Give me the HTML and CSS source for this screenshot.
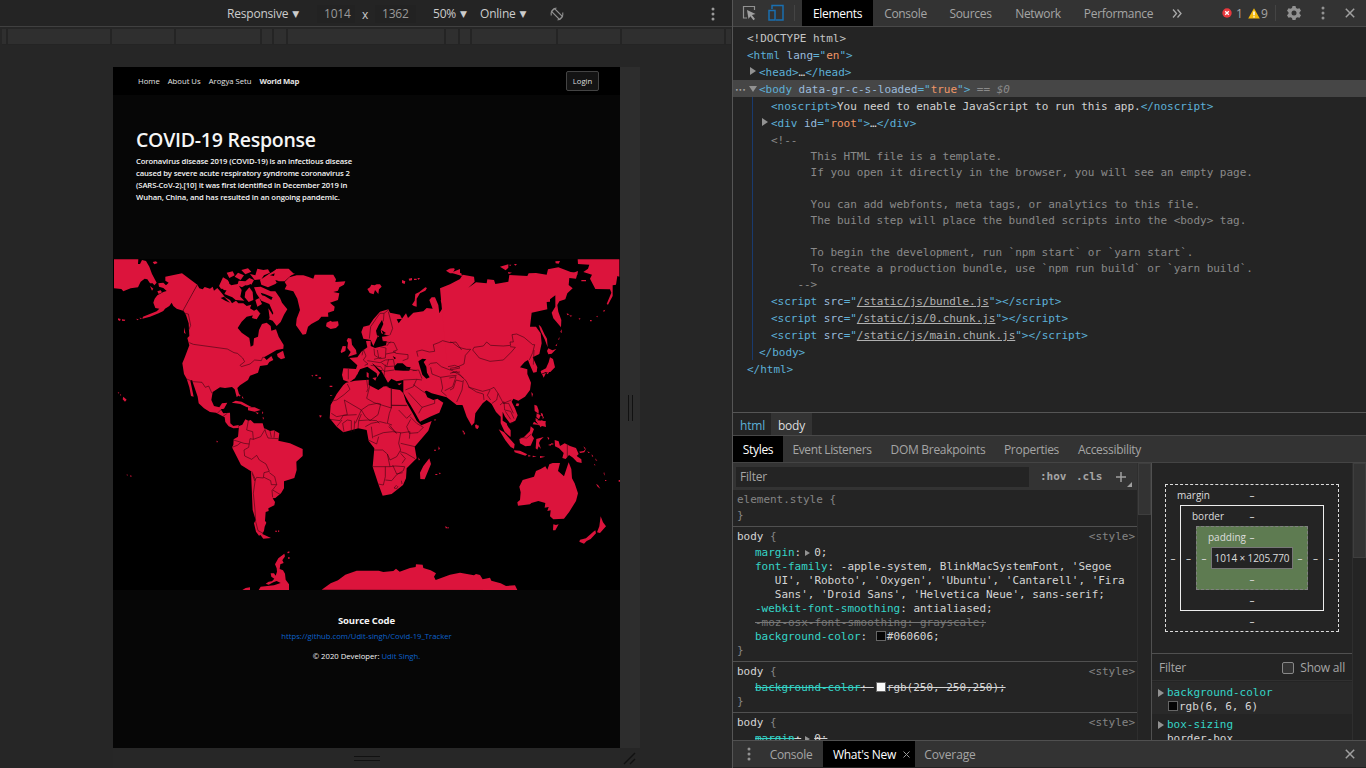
FILE: index.html
```html
<!DOCTYPE html>
<html lang="en">
<head>
<meta charset="utf-8">
<title>DevTools</title>
<link rel="stylesheet" href="styles.css">
</head>
<body>
<div class="app">
  <section class="preview">
    <div class="device-bar">
      <span class="preset">Responsive <i class="caret">▼</i></span>
      <span class="size">1014</span><span class="times">x</span><span class="size second">1362</span>
      <span class="scale">50% <i class="caret">▼</i></span>
      <span class="online">Online <i class="caret">▼</i></span>
      <svg class="rotate" width="16" height="16" viewBox="0 0 16 16" fill="none" stroke="#909090" stroke-width="1.1"><path d="M2.300 9.500A6 6 0 0 1 7.500 2M13.700 6.500A6 6 0 0 1 8.500 14"/><path d="M2.500 5.500 5.500 2.500 13.500 10.500 10.500 13.500Z"/></svg>
      <svg class="dots" width="4" height="14" viewBox="0 0 4 14" fill="#9a9a9a"><circle cx="2" cy="2" r="1.5"/><circle cx="2" cy="7" r="1.5"/><circle cx="2" cy="12" r="1.5"/></svg>
    </div>
    <div class="ruler"><i class="r1"></i><i class="r2"></i><i class="r3"></i><i class="r4"></i><i class="r5"></i><i class="r6"></i><i class="r7"></i><i class="r8"></i><i class="r9"></i><i class="r10"></i><i class="r11"></i><i class="r12"></i><i class="r13"></i></div>
    <div class="stage">
      <main class="site">
        <nav class="nav"><span>Home</span><span>About Us</span><span>Arogya Setu</span><b>World Map</b><button class="login">Login</button></nav>
        <header class="hero">
          <h1>COVID-19 Response</h1>
          <p>Coronavirus disease 2019 (COVID-19) is an infectious disease<br>caused by severe acute respiratory syndrome coronavirus 2<br>(SARS-CoV-2).[10] It was first identified in December 2019 in<br>Wuhan, China, and has resulted in an ongoing pandemic.</p>
        </header>
        <svg class="map" width="507" height="331" viewBox="9 27 1521 993">
          <g class="land">
            <path d="M12 28H85L84 42L90 42L96 30L108 33L118 50L126 72L140 98L133 106L128 100L120 100L112 88L104 86L92 95L84 112L62 115L40 124L34 117L12 115ZM128 36l10-2 5 5-10 4ZM120 108l10 8-4 6ZM142 124l10-3 4 6-10 5Z"/>
            <path d="M166 80L216 70L262 104L219 182L200 176L190 168L185 158L178 168L165 176L160 183L146 190L120 200L97 206L99 200L140 184L148 176L136 174L130 158L134 146L142 136L160 126L170 123L160 114L147 110L145 100L160 98L168 106L176 98L166 92Z"/>
            <path d="M262 104L268 115L278 118L284 111L300 116L308 110L312 122L322 114L332 125L345 142L360 150L366 160L378 152L385 160L400 160L410 168L424 164L420 175L432 182L440 178L452 192L440 190L430 196L410 200L395 215L383 234L395 248L418 264L422 290L430 286L432 265L444 260L447 240L456 222L470 218L482 228L484 242L498 238L506 260L521 285L520 296L500 300L486 308L462 322L470 330L484 318L490 330L478 336L472 345L450 348L444 368L420 377L414 390L390 406L382 414L388 436L380 441L374 418L366 411L345 414L330 412L308 426L304 450L312 468L328 472L336 460L352 458L342 476L332 478L340 490L360 488L361 520L370 528L386 525L386 534L370 535L356 529L346 516L344 502L318 488L300 486L282 475L266 460L263 440L250 402L246 390L241 392L251 440L243 438L238 412L230 386L222 372L217 340L225 320L238 286L232 264L238 258L236 220L228 195L219 180Z"/>
            <path d="M327 108l12-26 14 8 10 16 20-4 12 18-4 20 12 12-26-2-10-8-24-10 8-14-18-2ZM350 68l18-4 6 12-16 8ZM374 80l10-12 18 8-10 14ZM394 60l20-5 10 10-18 8ZM386 92l20 2 12-10 14 6-10 18-16-2-10 6-14-6ZM420 72l16 4 6-20 18 4 14-2 6 10-18 8-8 12-20 2ZM406 126l12-14 10 14 2 24-14 6-12-14ZM432 112l20-2 30 14 14 0 14 20 6 14 16 20-10 16-10 22-12 12-12-16-12-4 14-18-12-28-24-10-14-20ZM430 190l8-10 12 12-10 16-14-4ZM436 150l12-6 8 18-14 8ZM450 90l30-20 24-14 32 0 14 14-26 24-18 0-10 8-22 10-20-8ZM501 312l18-10 6 22-12 4-10-8ZM340 106l16 4 4 12-20-2ZM475 175l10 14 6 20-12-4Z"/>
            <path d="M365 458l12-6 18 3 22 12 8 4-14 1-20-10-20-3ZM414 472l20 0 18 8-18 5-20-4ZM40 440l10 9-5 6-7-7ZM30 432l4 3-3 2ZM23 426l5 2-2 3ZM24 205l8 2-2 6-6-3ZM36 208l10 1-2 4-8-1ZM78 206l8 2-3 3ZM88 203l7 1-2 4ZM222 232l5 20-5-4ZM386 432l6 4-4 4ZM397 438l4 8-5-2ZM456 484l4 4-3 5ZM458 500l4 4-3 5ZM436 487l10 1-3 5Z"/>
            <path d="M397 524L406 508L415 512L422 510L432 520L458 520L462 534L480 543L492 541L508 550L505 572L540 580L578 597L578 618L559 635L560 660L553 684L522 694L522 715L513 730L496 744L488 745L495 756L493 766L475 775L476 783L467 786L465 812L469 818L464 830L462 842L457 852L447 857L438 845L432 820L437 810L428 780L426 735L423 664L393 645L366 592L370 585L371 568L384 560L387 528ZM440 840L457 852L483 864L460 866Z"/>
            <path d="M495 842h6v3h-5ZM504 841l5 2-5 4ZM319 572l5 2-3 4ZM50 673l4 2-3 2ZM60 676l6 2-4 3ZM397 1020l10-6 13-2v8ZM446 1020l6-10 40-4 20-7-12-6-10 4-14 7-9-3 9-6 10-1 7-8-9-6-2-10 10 0 5 7 4-12-1-10-5-12 10-18 18-14 2 8-8 12 4 8-10 4-2 14 10 4 6 10 2 18 10 14v25ZM516 920l6-3 2 5-6 2ZM532 906l6-2 0 5-5 1ZM534 922h5v4h-5Z"/>
            <path d="M635 1019L662 1000L684 991L706 974L740 962L806 962L820 966L850 963L858 956L869 965L900 954L917 951L918 943L938 944L940 954L962 961L978 970L972 980L977 990L1020 974L1050 968L1092 976L1098 972L1110 975L1118 988L1140 983L1144 992L1172 1000L1188 1008L1215 1006L1222 1020Z"/>
          </g>
          <g class="land" transform="translate(510)">
            <path d="M-10 56L45 71L20 82L0 87L-30 74ZM14 96L28 82L50 76L70 76L84 80L100 86L104 74L160 74L168 88L166 96L196 94L192 104L178 112L174 122L160 126L178 130L174 150L150 158L164 170L162 182L144 188L145 200L124 200L116 210L94 222L84 230L78 252L68 254L58 240L48 226L50 206L60 180L52 146L40 124L14 118L20 106ZM140 218l12-6 4 3 18-1 2 12-8 8-16 3-14-8ZM262 117l8-5 4-8 10 2 6-3 10 0 5 7-8 8-2 14-10-12-4 13-12-4ZM366 90l10 4-2 8-8-3ZM386 86l10-2 0 7-8 1ZM402 86h8v4h-8ZM412 84l8 0-4 6ZM396 164l8-12 2-20 12-6 18-14 5 2-5 8-16 8-10 16 0 24-8-2ZM498 62l10-6 14-1-2 10 20-8v15l-16-2-14 0Z"/>
            <path d="M182 305l6-17 10 1-2 14-12 6ZM204 264l10 2 2 18 12 16 2 12-26 8 8-14-10-12 2-16-4-6ZM106 374h6v4h-6ZM94 376l6 0-3 4ZM116 382h7v4h-7ZM149 407h8v4h-8ZM150 435l8 0-6 3ZM118 495l8 2-6 6Z"/>
            <path d="M190 355L228 357L232 346L208 324L232 322L244 305L262 292L258 273L272 272L272 288L285 294L318 286L320 274L308 272L306 260L330 257L320 256L304 250L302 240L310 222L306 210L296 226L288 242L292 262L280 288L272 270L250 266L244 246L250 230L268 226L280 208L300 185L325 178L330 188L360 194L366 206L350 208L356 220L378 190L384 204L400 188L430 184L440 174L458 176L448 150L455 142L465 142L475 165L478 190L490 170L482 152L490 138L500 140L490 135L510 110L545 86V465H530L500 442L455 430L440 422L434 424L442 442L460 450L472 446L490 458L478 488L450 500L420 515L406 490L386 456L370 428L370 390L350 394L334 386L324 398L316 384L306 366L280 342L276 340L286 352L300 368L292 382L290 370L262 350L240 358L225 385L208 397L190 390L186 375Z"/>
            <path d="M277 384l13-2-4 10ZM316 408l12 4-12 2ZM352 401l14-3-8 8ZM260 366l6 4 0 14-6-4ZM228 370h5v3h-5ZM293 254l4 6-5 2Z"/>
          </g>
          <path class="land" d="M708 398L735 392L776 389L776 405L805 420L822 409L845 416L870 420L880 430L888 455L908 490L920 512L934 526L965 513L955 542L914 590L920 625L890 655L888 685L879 705L845 732L818 737L805 702L788 650L793 595L776 573L770 540L745 535L700 547L680 530L659 505L662 465L680 432L700 405Z"/>
          <path class="land" d="M958 625L963 642L944 688L931 687L930 668L940 648ZM930 491l34-2-18 8-16 2ZM925 622l5 8-4 1ZM974 507l5 3-6 2ZM986 589l4 8-5 2ZM972 599h6v3h-6ZM976 672h6v3h-6ZM986 668l7 1-4 4ZM1060 545l6 4-4 6ZM1006 828l7 5 4-1 0 3-10 0Z"/>
          <g class="land" transform="translate(1020)">
            <path d="M-30 115L0 103L30 87L38 74L72 80L74 95L55 113L78 97L110 100L112 88L132 90L136 102L175 95L178 75L232 78L236 70L258 69L290 74L294 58L325 52L362 66L383 68L378 86L358 84L356 105L368 115L352 130L346 148L328 154L322 165L325 185L334 210L333 232L310 205L305 188L316 170L316 136L300 148L300 155L290 156L292 178L245 188L240 230L258 230L272 250L275 280L268 312L248 322L262 352L260 366L250 368L240 346L234 330L224 336L210 352L232 358L232 372L243 398L240 420L225 440L205 452L190 446L185 455L195 475L203 496L196 512L180 520L165 500L158 485L158 512L170 520L180 560L164 545L152 520L152 500L138 486L125 462L110 450L98 460L76 490L73 518L65 527L50 500L38 466L20 462L0 440ZM75 524l12 3-4 10-6-2ZM200 460l8 1-3 8-8-2ZM244 426l5 6-3 10ZM383 28H508V80L502 78L498 104L488 106V138L474 164L470 162L484 128L480 118L436 117L420 86L426 74L400 66L414 56L418 44L384 42ZM266 224l7 6 10 22 8 14 2 26-9-24-12-24ZM295 295l12 6 12-4-14 14-10 2-4-10ZM300 322l9 5 6 25-14 14-13 0-14 5-2-8 16-8 8-18ZM276 372l12-3-7 14ZM288 368l10-3-5 8ZM316 288l6-8-2 8ZM324 270l4-9 0 7ZM331 245l4-7 0 12ZM350 190l8 3-6 3ZM358 196l9 1-5 3ZM386 204l6 2-4 3ZM420 210h5v4h-5ZM438 200l6-3-2 5ZM459 182l7-3-4 7ZM490 82l6 6-4 16ZM370 68l14-5-2 12ZM394 90h14v4h-14ZM316 34l14-1-4 8-9-1ZM150 50l25-7 0 10-8 8ZM178 44l6 0-4 5ZM192 42l9 0-5 5ZM174 66l12 2-10 4ZM0 66l12 0 22 4 2 8-20-6ZM0 56l15 0-4 8ZM253 464l8 3 5 14 0 10-12-8ZM260 490l12 6-5 12-8-7ZM272 488l6 3 2 10-6-4ZM256 510l20 2 12 2-8 14-14-2Z"/>
          </g>
          <g class="land" transform="translate(750 495)">
            <path d="M416 43L432 52L464 88L462 101L452 96L436 76ZM426 24L438 26L452 46L452 66L442 56L434 38ZM462 106L480 107L502 118L496 122L464 112ZM478 72L492 66L510 48L512 34L522 42L515 60L522 70L512 92L496 94L480 85ZM527 100l2-28 22-6-10 10-4 8 6 18-7-8-4 10ZM505 119l8 4-8 2ZM518 122l12 2-12 3ZM540 123l16 2-16 4ZM564 90l10-4-2 6ZM574 84l8 3-8 3ZM562 65l6 4-3 6ZM584 75l12 4 4 14 14-8 16 8 18 6 8 18-6 6 14 10 1 11-14-3-12-13-12-8-10 12-10-3 4-15-14-14-12-6ZM522 20l16 10-20-2ZM526 10l8 2-5 10ZM538 28l6-12 12 4 2 16-12-3-5 4ZM548 2l4 6-4 4ZM657 110l14-2 8-8-6 12-12 2ZM670 94l7 6-3 2ZM682 108l8 6-5 0ZM695 118l5 6-4 1ZM706 130l6 8-5-2ZM702 146l5 5-4 0ZM732 170l3 12-4-6ZM708 207l6 3 7 11-8-6ZM735 195h4v3h-4ZM776 195h4v5h-4ZM348 27l8 10-4 4-5-5ZM308 45l5 5-5 2Z"/>
            <path d="M478 215L488 195L522 185L528 168L542 162L556 154L562 164L568 148L578 144L600 144L594 168L612 184L626 142L634 162L636 190L644 205L654 235L648 258L628 290L612 311L580 313L570 304L572 286L562 288L566 276L554 278L556 264L535 258L514 264L510 268L474 272L472 262L480 255L482 232ZM580 328L588 330L596 328L586 346L579 346ZM722 304L729 322L738 334L720 354L711 352L718 334ZM706 346L708 355L692 372L680 378L672 386L658 380L660 374L678 370L700 350Z"/>
          </g>
          <g class="water">
            <path d="M852 350l10-10 16 0 12 10 12 2-4 10-18 0-26-1ZM925 334l12-8 12 2-8 8 8 14 2 18 8 14-10 4-12-12-8-26ZM806 354l4 6 8 2-6 3ZM848 318l10 6-4 4ZM814 240l14 9-8 4ZM332 144l10-4 18 18-14-6ZM404 110l18-8 8 8-14 2ZM452 128l12 4 24 10-4 8-20-12-8-2ZM496 90l12 4-8 4ZM480 76l14-6-2 8ZM370 98l12-4-2 8ZM358 94l10 10-10-2Z"/>
          </g>
          <g class="border">
            <path d="M262 104L219 182L225 190L235 192L242 226L236 240M238 278L250 283L352 297L372 308L382 310L398 324L404 335L390 346L394 350L420 342L434 330L454 332L458 322L464 322M230 387L250 395L276 397L286 412L296 408L306 430M322 490L332 480M338 500L352 490"/>
            <path d="M415 512L410 540L428 545L430 568L420 566L416 592L402 600L404 618L425 628L440 616L448 630L468 642L478 664L462 668L460 684L440 682L434 692L426 670M370 570L384 574L402 580L418 582M366 592L382 586L392 578M425 664L436 688L430 730L435 780L437 815L444 842L460 850M430 568L452 560L464 540M464 534L468 550L474 564L505 566M480 543L484 562M494 543L492 563M478 668L494 680L500 704L484 704L482 692L462 682M500 704L486 722L488 742M488 720L510 733"/>
            <path d="M780 405L770 445L792 458L844 474L844 416M844 466H892M844 474L838 490L832 520L846 525M712 402L720 418L702 434L680 450L662 454M703 450L754 480L736 520M754 480L776 465L802 460L812 462L804 494L780 512L766 500L754 480M703 450L712 494L680 500L664 490M660 508L690 512L700 496L740 494M680 530L696 510M702 545L698 520L712 510L724 512L724 545M732 544L734 512M744 537L746 512L774 510L800 512L808 520M746 512L754 492M836 530L860 550L838 525M866 480L890 505L904 492M900 500L920 520L940 532L924 548L898 550L890 530L902 508M790 560L820 548L848 545L872 548L866 580L872 600L860 620L840 630L832 612L818 600L792 600M775 570L800 582L806 560M788 650L840 650L832 612M870 605L888 610L915 626M872 580L915 590M872 549L900 545L898 566M840 650L856 648L884 650M826 680L826 650M826 690L845 692L860 674L880 662L884 650M848 645L860 672L878 668M872 610L886 626L876 640M805 702L820 705L826 680M860 705L852 714L860 716L864 708M874 692L876 702M788 565L784 530M766 530L784 520L810 515L830 520"/>
          </g>
          <g class="border" transform="translate(510)">
            <path d="M268 266L272 230L294 198L300 190L312 190L325 180M312 190L310 214M325 185L338 235L330 255M320 288L330 276L342 278L352 300L340 304L348 310L384 314L384 326L368 332M282 296L284 316L300 326L316 324L318 294L300 290M250 298L258 318L250 330L264 342L254 346M262 332L300 338L316 330L340 328L344 348L320 350L304 338M272 346L302 350L312 364L342 360M282 328L304 322M308 274L332 278M318 312L348 306M316 344L312 378M205 357V388M370 390L410 388L426 390M410 388L400 410L376 420M400 404L428 424L438 430M385 428L426 472L464 460L464 448M426 472L416 490M398 362L416 360L426 386M378 356L410 362M414 320L410 304L426 300L448 306L464 304L460 284L476 278L488 272L510 278L528 276L545 300M446 345L452 340L470 338L484 350L510 360L540 354M452 352L456 372L482 382L508 378L530 376M482 382L488 414L484 424L500 438M508 384L528 380L518 410L494 422M504 350L524 346L540 352M515 368L540 366"/>
            <path d="M260 390L264 416L260 426M334 416V474M335 466L380 467M250 298L246 316M292 300L296 322M326 328L320 350"/>
          </g>
          <g class="border" transform="translate(1020)">
            <path d="M0 276L8 278L26 292L50 298L62 298L46 316L42 342L20 352L0 355M68 300L72 292L100 288L110 276L122 286L160 288L182 286L180 276L190 276L186 254L200 252L222 262L248 284L254 284L248 308L238 330M68 300L88 324L120 334L160 330L184 306L196 292L180 290M0 358L30 376L48 392L58 412L98 424L120 418L132 412L144 430L160 460L184 450M54 410L80 426L100 432L102 450M120 420L112 436L122 450M144 430L140 450L126 460M150 465L162 455L164 480L182 484L192 506M166 484L182 508M160 460L176 460L190 490M40 390L36 420L20 456M38 395L18 390L10 415L0 420M0 370L20 364L40 384M252 300L250 344"/>
            <path d="M352 584V622M210 562L230 564L244 552M180 520L190 518"/>
          </g>
        </svg>
        <footer class="footer"><b>Source Code</b><a class="repo">https://github.com/Udit-singh/Covid-19_Tracker</a><p>© 2020 Developer: <a>Udit Singh.</a></p></footer>
      </main>
      <div class="handle-right"><i></i><i></i></div>
      <div class="handle-bottom"><i></i><i></i></div>
      <svg class="handle-corner" width="13" height="13" viewBox="0 0 13 13" stroke="#111" stroke-width="1.4"><path d="M1 12 12 1M7 12l5-5"/></svg>
    </div>
  </section>
  <section class="devtools">
    <div class="main-tabs">
      <svg class="inspect" width="16" height="16" viewBox="0 0 16 16"><path d="M6 13H2.5V1.5H13.5V5" fill="none" stroke="#919191" stroke-width="1.2"/><path d="M6 5l8.500 4-3.600 1.100 3.100 3.800-1.600 1.300-3-3.900L7.500 14Z" fill="#a0a0a0"/></svg>
      <svg class="device" width="16" height="18" viewBox="0 0 16 18" fill="none" stroke="#1a6fb0" stroke-width="1.5"><path d="M4 5V1.500H15V16H8"/><rect x="1" y="6.500" width="6" height="9.500"/></svg>
      <i class="sep"></i>
      <span class="tab on t-el">Elements</span><span class="tab t-co">Console</span><span class="tab t-so">Sources</span><span class="tab t-ne">Network</span><span class="tab t-pe">Performance</span>
      <svg class="more" width="10" height="9" viewBox="0 0 10 9" fill="none" stroke="#aaa" stroke-width="1.3"><path d="M1 .5l3.500 4L1 8.500M5.500.5l3.500 4-3.500 4"/></svg>
      <svg class="err" width="10" height="10" viewBox="0 0 10 10"><circle cx="5" cy="5" r="4.700" fill="#e8383d"/><path d="M3.200 3.200l3.600 3.600M6.800 3.200 3.200 6.800" stroke="#fff" stroke-width="1.300"/></svg><span class="count">1</span>
      <svg class="warn" width="12" height="11" viewBox="0 0 12 11"><path d="M6 .3 11.800 10.500H.2Z" fill="#f2b90b"/><path d="M6 3.500v3.700M6 8.200v1.400" stroke="#fff" stroke-width="1.500"/></svg><span class="count nine">9</span>
      <i class="sep s2"></i>
      <svg class="gear" width="16" height="16" viewBox="0 0 16 16"><path d="M6.500 1h3l.5 2 1.500.8 2-.6 1.500 2.600L13.500 7.300v1.400L15 10.200l-1.500 2.600-2-.6-1.500.8-.5 2h-3L6 13l-1.500-.8-2 .6L1 10.200l1.500-1.500V7.300L1 5.800l1.500-2.600 2 .6L6 3Z" fill="#929292"/><circle cx="8" cy="8" r="2.500" fill="#333"/></svg>
      <svg class="dots2" width="4" height="14" viewBox="0 0 4 14" fill="#929292"><circle cx="2" cy="2" r="1.500"/><circle cx="2" cy="7" r="1.500"/><circle cx="2" cy="12" r="1.500"/></svg>
      <svg class="close" width="10" height="10" viewBox="0 0 10 10" stroke="#a0a0a0" stroke-width="1.500"><path d="M.8.8l8.400 8.400M9.200.8.8 9.200"/></svg>
    </div>
    <div class="dom">
      <div class="row d0 plain">&lt;!DOCTYPE html&gt;</div>
      <div class="row d0">&lt;html <u>lang</u>="<em>en</em>"&gt;</div>
      <div class="row d1"><i class="arrow"></i>&lt;head&gt;<s>…</s>&lt;/head&gt;</div>
      <div class="row d1 selected"><i class="ellipsis">•••</i><i class="arrow open"></i>&lt;body <u>data-gr-c-s-loaded</u>="<em>true</em>"&gt;<q> == <cite>$0</cite></q></div>
      <div class="children">
        <div class="row d2">&lt;noscript&gt;<s>You need to enable JavaScript to run this app.</s>&lt;/noscript&gt;</div>
        <div class="row d2"><i class="arrow"></i>&lt;div <u>id</u>="<em>root</em>"&gt;<s>…</s>&lt;/div&gt;</div>
        <div class="comment">&lt;!--
      This HTML file is a template.
      If you open it directly in the browser, you will see an empty page.

      You can add webfonts, meta tags, or analytics to this file.
      The build step will place the bundled scripts into the &lt;body&gt; tag.

      To begin the development, run `npm start` or `yarn start`.
      To create a production bundle, use `npm run build` or `yarn build`.
    --&gt;</div>
        <div class="row d2">&lt;script <u>src</u>="<a>/static/js/bundle.js</a>"&gt;&lt;/script&gt;</div>
        <div class="row d2">&lt;script <u>src</u>="<a>/static/js/0.chunk.js</a>"&gt;&lt;/script&gt;</div>
        <div class="row d2">&lt;script <u>src</u>="<a>/static/js/main.chunk.js</a>"&gt;&lt;/script&gt;</div>
        <div class="row d1">&lt;/body&gt;</div>
      </div>
      <div class="row d0">&lt;/html&gt;</div>
    </div>
    <div class="crumbs"><span class="c-html">html</span><span class="c-body">body</span></div>
    <div class="sub-tabs"><span class="tab on p-st">Styles</span><span class="tab p-ev">Event Listeners</span><span class="tab p-do">DOM Breakpoints</span><span class="tab p-pr">Properties</span><span class="tab p-ac">Accessibility</span></div>
    <div class="panes">
      <div class="styles">
        <div class="filter-bar"><span class="filter">Filter</span><b class="hov">:hov</b><b class="cls">.cls</b><svg class="plus" width="18" height="16" viewBox="0 0 18 16"><path d="M6 0v10M1 5h10" stroke="#a0a0a0" stroke-width="1.500"/><path d="M17 10v5h-5Z" fill="#a0a0a0"/></svg></div>
        <div class="rule"><div class="head dim">element.style {</div><div class="end">}</div></div>
        <div class="rule">
          <div class="head"><span>body <i>{</i></span><i>&lt;style&gt;</i></div>
          <div class="prop"><b>margin</b>:<i class="tri"></i>0;</div>
          <div class="prop"><b>font-family</b>: -apple-system, BlinkMacSystemFont, 'Segoe
   UI', 'Roboto', 'Oxygen', 'Ubuntu', 'Cantarell', 'Fira
   Sans', 'Droid Sans', 'Helvetica Neue', sans-serif;</div>
          <div class="prop"><b>-webkit-font-smoothing</b>: antialiased;</div>
          <div class="prop gone">-moz-osx-font-smoothing: grayscale;</div>
          <div class="prop"><b>background-color</b>: <i class="swatch"></i>#060606;</div>
          <div class="end">}</div>
        </div>
        <div class="rule">
          <div class="head"><span>body <i>{</i></span><i>&lt;style&gt;</i></div>
          <div class="prop struck"><b>background-color</b>: <i class="swatch white"></i>rgb(250, 250,250);</div>
          <div class="end">}</div>
        </div>
        <div class="rule">
          <div class="head"><span>body <i>{</i></span><i>&lt;style&gt;</i></div>
          <div class="prop struck"><b>margin</b>:<i class="tri"></i>0;</div>
        </div>
      </div>
      <div class="scroll"><i></i></div>
      <div class="computed">
        <div class="metrics">
          <div class="box margin"><span class="name">margin</span><span>–</span>
            <div class="mid"><span>–</span>
              <div class="box border-box"><span class="name">border</span><span>–</span>
                <div class="mid"><span>–</span>
                  <div class="box padding"><span class="name">padding</span><span>–</span>
                    <div class="mid"><span>–</span><div class="content">1014 × 1205.770</div><span>–</span></div><span>–</span></div>
                  <span>–</span></div><span>–</span></div>
              <span>–</span></div><span>–</span></div>
        </div>
        <div class="cfilter"><span>Filter</span><i class="check"></i><span>Show all</span></div>
        <div class="citem first"><div><i class="arrow"></i>background-color</div><p><i class="swatch"></i>rgb(6, 6, 6)</p></div>
        <div class="citem"><div><i class="arrow"></i>box-sizing</div><p>border-box</p></div>
      </div>
      <div class="scroll tall"><i></i></div>
    </div>
    <div class="drawer">
      <svg class="dots3" width="4" height="14" viewBox="0 0 4 14" fill="#929292"><circle cx="2" cy="2" r="1.500"/><circle cx="2" cy="7" r="1.500"/><circle cx="2" cy="12" r="1.500"/></svg>
      <span class="tab w-co">Console</span><span class="tab on w-wn">What's New<svg width="7" height="7" viewBox="0 0 7 7" stroke="#999"><path d="M.5.5l6 6M6.500.5l-6 6"/></svg></span><span class="tab w-cv">Coverage</span>
      <svg class="close" width="10" height="10" viewBox="0 0 10 10" stroke="#a0a0a0" stroke-width="1.500"><path d="M.8.8l8.400 8.400M9.200.8.8 9.200"/></svg>
    </div>
  </section>
</div>
</body>
</html>
```
FILE: styles.css
```css
* { box-sizing: border-box; }
body { margin: 0; background: #242424; font-family: "Open Sans", "Noto Sans", sans-serif; font-size: 12px; color: #a5a5a5; }
i { font-style: normal; }
svg { display: block; flex: none; }
.app { display: flex; width: 1366px; height: 768px; overflow: hidden; }

/* Device preview */
.preview { width: 733px; height: 768px; flex: none; background: #262626; border-right: 1px solid #555; }
.device-bar { height: 27px; border-bottom: 1px solid #404040; background: #242424; display: flex; align-items: center; padding: 1px 0 0 227px; color: #ccc; white-space: nowrap; letter-spacing: -.2px; }
.caret { font-family: "DejaVu Sans"; font-size: 9px; position: relative; top: -1px; left: 1px; }
.preset { width: 90px; }
.size { width: 38px; height: 18px; line-height: 18px; padding-left: 7px; background: #222; color: #999; }
.times { width: 20px; text-align: center; padding-top: 2px; }
.second { width: 41px; }
.scale { width: 47px; margin-left: 17px; }
.online { width: 69px; }
.dots { margin-left: 146px; }
.ruler { height: 16px; margin: 2px 2px 0; width: 729px; display: flex; gap: 2px; background: #242424; }
.ruler i { background: #2f2f2f; height: 15px; flex: none; }
.r1 { width: 4px; } .r2 { width: 102px; } .r3 { width: 62px; } .r4 { width: 84px; } .r5 { width: 10px; } .r6 { width: 12px; } .r7 { width: 156px; }
.r8 { width: 12px; } .r9 { width: 10px; } .r10 { width: 84px; } .r11 { width: 62px; } .r12 { width: 102px; } .r13 { width: 5px; }
.stage { display: grid; grid-template-columns: 507px 20px; grid-template-rows: 681px 20px; padding: 22px 0 0 113px; }
.site { background: #060606; color: #f5f5f5; }
.nav { height: 28px; background: #000; display: flex; align-items: center; gap: 8px; padding: 0 21px 0 25px; font-size: 7.7px; letter-spacing: 0; white-space: nowrap; color: #e4e4e4; }
.nav b { font-weight: 700; letter-spacing: -.24px; }
.login { margin-left: auto; width: 33px; height: 20px; border: 1px solid #444; border-radius: 2px; background: #141414; color: #ddd; font: 7.7px "Open Sans", sans-serif; padding: 0; }
.hero { height: 164px; padding: 32px 23px 0; }
.hero h1 { margin: 0; font-size: 19.5px; line-height: 26px; font-weight: 600; letter-spacing: -.25px; white-space: nowrap; }
.hero p { margin: 2px 0 0; font-size: 7.7px; line-height: 12px; font-weight: 600; letter-spacing: -.13px; white-space: nowrap; }
.map { background: #000; }
.land path, path.land { fill: #dc143c; }
.water { fill: #000; }
.border { fill: none; stroke: #3c0510; stroke-width: 1.8; stroke-linejoin: round; }
.footer { display: flex; flex-direction: column; align-items: center; padding-top: 24px; font-size: 7.7px; line-height: 12px; white-space: nowrap; }
.footer b { font-size: 9.5px; line-height: 14px; letter-spacing: -.1px; }
.footer a { color: #0d62cc; }
.footer .repo { margin-top: 2px; }
.footer p { margin: 8px 0 0; }
.handle-right { background: #2d2d2d; display: flex; justify-content: center; align-items: center; gap: 3px; }
.handle-right i { width: 1px; height: 26px; background: #111; }
.handle-bottom { background: #272727; display: flex; flex-direction: column; align-items: center; justify-content: center; gap: 3px; }
.handle-bottom i { width: 26px; height: 1px; background: #111; }
.handle-corner { margin: 4px 0 0 3px; }

/* Tool panels */
.devtools { width: 633px; height: 768px; display: flex; flex-direction: column; background: #242424; }
.devtools > * { flex: none; }
.tab { height: 26px; line-height: 28px; text-align: center; white-space: nowrap; letter-spacing: -.3px; }
.on { background: #000; color: #fff; }
.main-tabs { height: 27px; display: flex; align-items: center; border-bottom: 1px solid #484848; background: #333; padding-left: 8px; }
.device { margin-left: 11px; }
.sep { width: 1px; height: 16px; background: #444; margin: 0 7px 0 10px; }
.t-el { width: 71px; } .t-co { width: 65px; } .t-so { width: 65px; } .t-ne { width: 70px; } .t-pe { width: 91px; }
.more { margin-left: 8px; }
.err { margin-left: 40px; }
.count { width: 16px; padding-left: 4px; margin-right: 0; }
.count.nine { width: 15px; padding-left: 1px; margin: 0; }
.s2 { margin: 0 10px 0 0; }
.dots2 { margin-left: 19px; }
.main-tabs .close { margin-left: 20px; }
.dom, .styles, .citem { font: 11px/14px "DejaVu Sans Mono", monospace; letter-spacing: -.022px; }
.dom { height: 385px; padding-top: 2px; color: #5db0d7; display: flex; flex-direction: column; }
.row { height: 17px; line-height: 20px; position: relative; white-space: pre; }
.plain { color: #c5c5c5; }
.d0 { padding-left: 14px; } .d1 { padding-left: 26px; } .d2 { padding-left: 38px; }
.row u { text-decoration: none; color: #9bbbdc; }
.row em { font-style: normal; color: #f29766; }
.row s { text-decoration: none; color: #d2d2d2; }
.row q { quotes: none; color: #8a8a8a; }
.row a { color: #b0b0b0; text-decoration: underline; }
.selected { background: #464646; }
.arrow { position: absolute; margin-left: -9px; top: 4px; border: 4px solid transparent; border-left: 6px solid #929292; border-right: 0; }
.arrow.open { border: 4px solid transparent; border-top: 6px solid #929292; border-bottom: 0; top: 6px; margin-left: -10px; }
.ellipsis { position: absolute; left: 2px; top: 0; font-size: 6px; line-height: 19px; color: #aaa; }
.children { display: flex; flex-direction: column; position: relative; }
.children::before { content: ""; position: absolute; left: 19px; top: 0; bottom: 0; width: 1px; background: #193a6e; }
.comment { height: 161px; line-height: 16px; padding: 2px 0 0 38px; color: #898989; white-space: pre; }
.crumbs { height: 24px; border-top: 1px solid #555; border-bottom: 1px solid #484848; display: flex; line-height: 25px; }
.c-html { width: 38px; padding-left: 7px; color: #5db0d7; letter-spacing: -.2px; }
.c-body { width: 41px; text-align: center; background: #333; color: #ddd; letter-spacing: -.2px; }
.sub-tabs { height: 27px; background: #333; border-bottom: 1px solid #444; display: flex; }
.p-st { width: 50px; } .p-ev { width: 98px; } .p-do { width: 114px; } .p-pr { width: 73px; } .p-ac { width: 83px; }
.p-ev { letter-spacing: -.38px; }
.panes { height: 277px; display: flex; overflow: hidden; }
.styles { width: 404px; color: #d5d5d5; }
.filter-bar { height: 27px; background: #333; display: flex; align-items: center; padding-left: 3px; color: #a5a5a5; }
.filter { width: 293px; height: 20px; line-height: 20px; background: #242424; padding-left: 4px; font-family: "Open Sans", sans-serif; font-size: 12px; letter-spacing: -.2px; }
.hov { margin-left: 11px; width: 36px; } .cls { width: 39px; }
.plus { margin-top: 6px; }
.rule { padding: 1px 0 3px 4px; border-bottom: 1px solid #505050; }
.head { height: 18px; line-height: 17px; display: flex; justify-content: space-between; padding-right: 2px; }
.head i, .dim, .end { color: #858585; }
.prop { padding-left: 18px; line-height: 14px; white-space: pre; }
.prop b { font-weight: 400; color: #35d4c7; }
.gone { color: #777; text-decoration: line-through; }
.struck, .struck b { text-decoration: line-through; }
.tri { display: inline-block; border: 3.500px solid transparent; border-left: 5px solid #929292; border-right: 0; margin: 0 4px; }
.swatch { display: inline-block; width: 10px; height: 10px; margin-left: 1px; margin-right: 1px; vertical-align: -1px; background: #060606; border: 1px solid #666; }
.prop .swatch { margin-left: 2px; }
.swatch.white { background: #fafafa; }
.scroll { width: 15px; border-right: 1px solid #505050; border-left: 1px solid #2e2e2e; background: #242424; }
.scroll i { display: block; height: 52px; background: #333; border: 1px solid #3e3e3e; }
.scroll.tall { width: 14px; border-right: 0; }
.scroll.tall i { height: 95px; }
.computed { width: 200px; }
.metrics { height: 191px; border-bottom: 1px solid #505050; padding: 21px 0 0 13px; font-size: 10px; color: #ddd; }
.box { position: relative; display: flex; flex-direction: column; align-items: center; line-height: 20px; }
.box > .name { position: absolute; left: 11px; top: 0; }
.mid { display: flex; align-items: center; justify-content: space-between; align-self: stretch; }
.mid > span { flex: 1; text-align: center; }
.margin { width: 174px; height: 148px; border: 1px dashed #ddd; }
.border-box { width: 144px; height: 106px; border: 1px solid #eee; }
.padding { width: 112px; height: 64px; border: 1px dashed #808080; background: #5e7b51; }
.content { width: 82px; height: 22px; line-height: 20px; border: 1px solid #777; background: #242424; text-align: center; white-space: nowrap; letter-spacing: -.1px; }
.cfilter { height: 27px; border-bottom: 1px solid #303030; display: flex; align-items: center; padding: 1px 7px 0; letter-spacing: -.2px; }
.check { width: 12px; height: 12px; border: 1px solid #888; border-radius: 2px; margin: 0 6px 0 auto; background: #333; }
.citem { position: relative; color: #35d4c7; padding-left: 15px; padding-top: 4px; height: 33px; white-space: nowrap; }
.citem .arrow { top: 7px; margin-left: -9px; border-left-width: 6px; }
.citem p { margin: 0; color: #d5d5d5; }
.first { background: #292929; margin-top: 1px; height: 32px; }
.drawer { height: 28px; background: #333; border-top: 1px solid #505050; border-bottom: 1px solid #222; display: flex; align-items: center; padding-left: 14px; }
.w-co { width: 72px; padding-left: 8px; } .w-wn { width: 92px; display: flex; align-items: center; padding-left: 10px; gap: 7px; line-height: 27px; } .w-cv { width: 70px; letter-spacing: -.1px; }
.drawer .close { margin-left: auto; margin-right: 11px; }
```
